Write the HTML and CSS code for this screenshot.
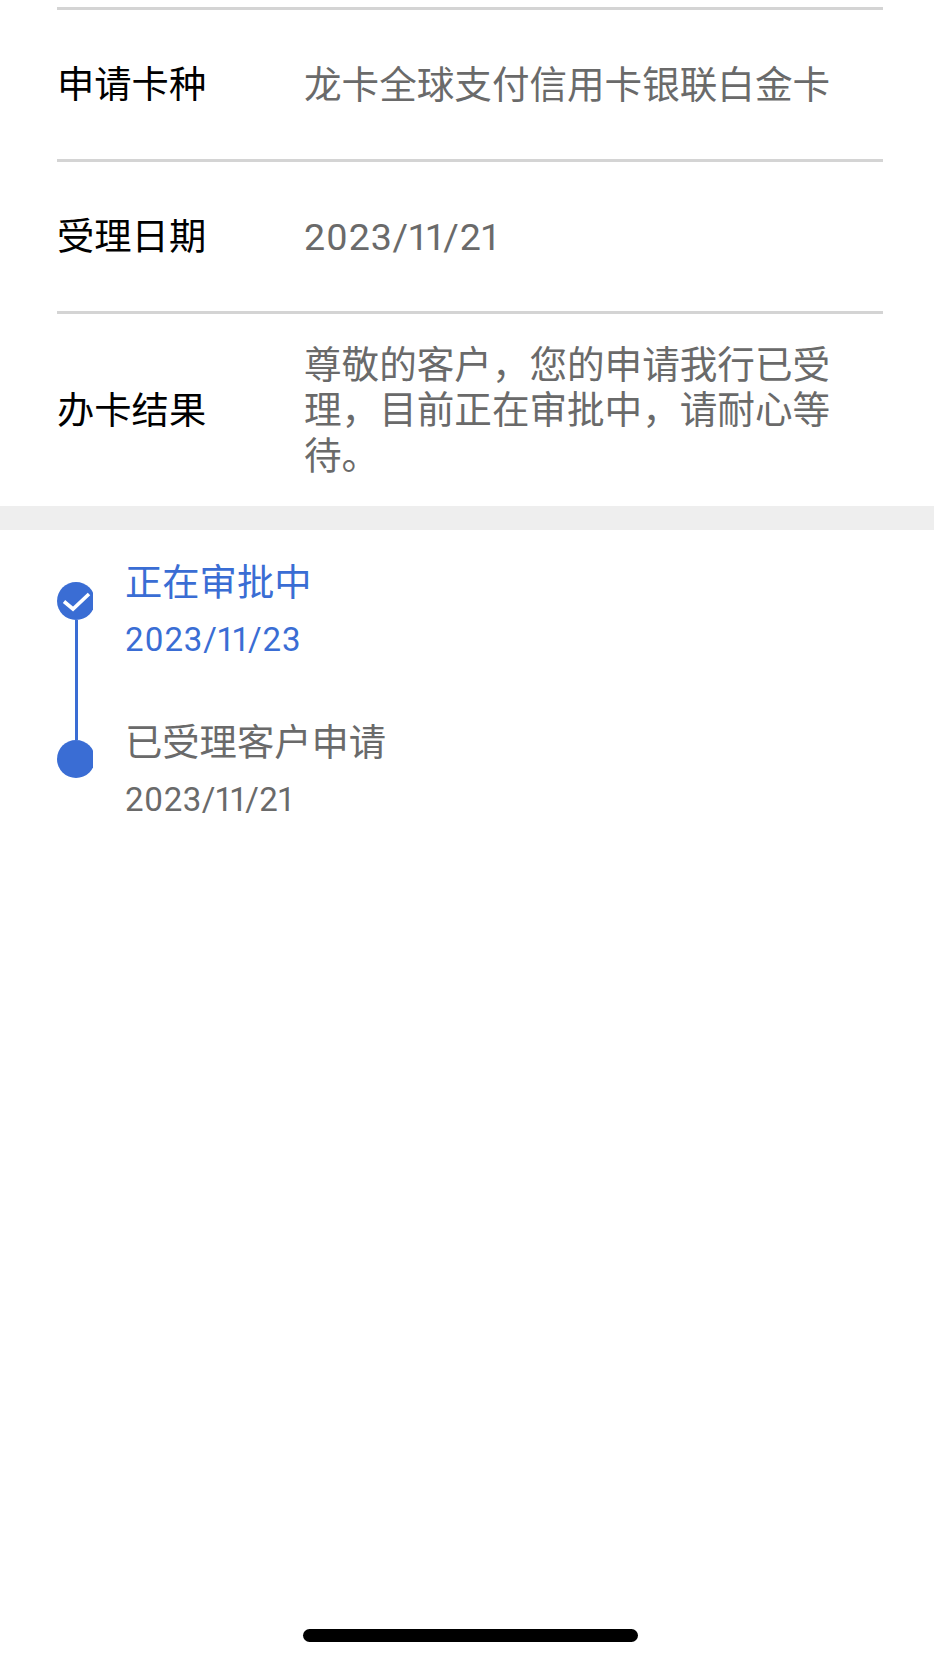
FILE: index.html
```html
<!DOCTYPE html>
<html lang="zh-CN">
<head>
<meta charset="utf-8">
<title>办卡进度</title>
<link rel="stylesheet" href="styles.css">
</head>
<body>
<main class="page">
  <section class="details">
    <div class="row">
      <div class="label">申请卡种</div>
      <div class="value">龙卡全球支付信用卡银联白金卡</div>
    </div>
    <div class="row">
      <div class="label">受理日期</div>
      <div class="value value-date">2023/11/21</div>
    </div>
    <div class="row row-last">
      <div class="label">办卡结果</div>
      <div class="value">尊敬的客户，您的申请我行已受理，目前正在审批中，请耐心等待。</div>
    </div>
  </section>
  <div class="band"></div>
  <section class="timeline">
    <div class="step step-active">
      <div class="rail">
        <div class="dot">
          <svg class="check" viewBox="0 0 38 38" aria-hidden="true"><path d="M7 19.5 L16 27 L32 12" /></svg>
        </div>
        <div class="connector"></div>
      </div>
      <div class="step-body">
        <div class="step-title">正在审批中</div>
        <div class="step-date">2023/11/23</div>
      </div>
    </div>
    <div class="step">
      <div class="rail">
        <div class="dot"></div>
      </div>
      <div class="step-body">
        <div class="step-title">已受理客户申请</div>
        <div class="step-date">2023/11/21</div>
      </div>
    </div>
  </section>
  <div class="home-area"><div class="home-bar"></div></div>
</main>
</body>
</html>
```
FILE: styles.css
```css
* { box-sizing: border-box; }
html, body { margin: 0; padding: 0; background: #fff; }
body { font-family: Roboto, "Noto Sans CJK SC", sans-serif; font-variant-numeric: proportional-nums; }
.page { width: 934px; height: 1661px; display: flex; flex-direction: column; overflow: hidden; }
.details { padding: 7px 51px 0 57px; }
.row { display: flex; align-items: center; height: 152px; padding-top: 2px; border-top: 3px solid #d4d4d4; }
.row-last { height: 195px; }
.label { width: 247px; flex: none; font-size: 37.3px; line-height: 45px; color: #000; }
.value { width: 532px; font-size: 37.6px; line-height: 45.2px; color: #6a6a6a; }
.value-date { letter-spacing: 0.85px; }
.band { height: 24px; background: #eeeeee; flex: none; }
.timeline { padding: 52px 0 0 57px; }
.step { display: flex; height: 158px; color: #6a6a6a; }
.step-active { color: #3a6dd4; }
.rail { width: 36px; flex: none; display: flex; flex-direction: column; align-items: flex-start; overflow: hidden; }
.dot { width: 38px; height: 38px; flex: none; border-radius: 50%; background: #3a6dd4; }
.check { display: block; width: 38px; height: 38px; fill: none; stroke: #fff; stroke-width: 3.6; }
.connector { width: 2.5px; flex: 1; margin-left: 18px; background: #3a6dd4; }
.step-body { margin: -21px 0 0 32px; }
.step + .step .step-body { margin-top: -19px; }
.step-title { font-size: 37.3px; line-height: 44px; white-space: nowrap; }
.step-date { margin-top: 15px; font-size: 33px; line-height: 40px; white-space: nowrap; letter-spacing: 0.85px; }
.step + .step .step-date { letter-spacing: 0.45px; }
.home-area { flex: 1; display: flex; justify-content: center; align-items: flex-end; padding: 0 0 19px 7px; }
.home-bar { width: 335px; height: 13px; border-radius: 7px; background: #000; }
```
